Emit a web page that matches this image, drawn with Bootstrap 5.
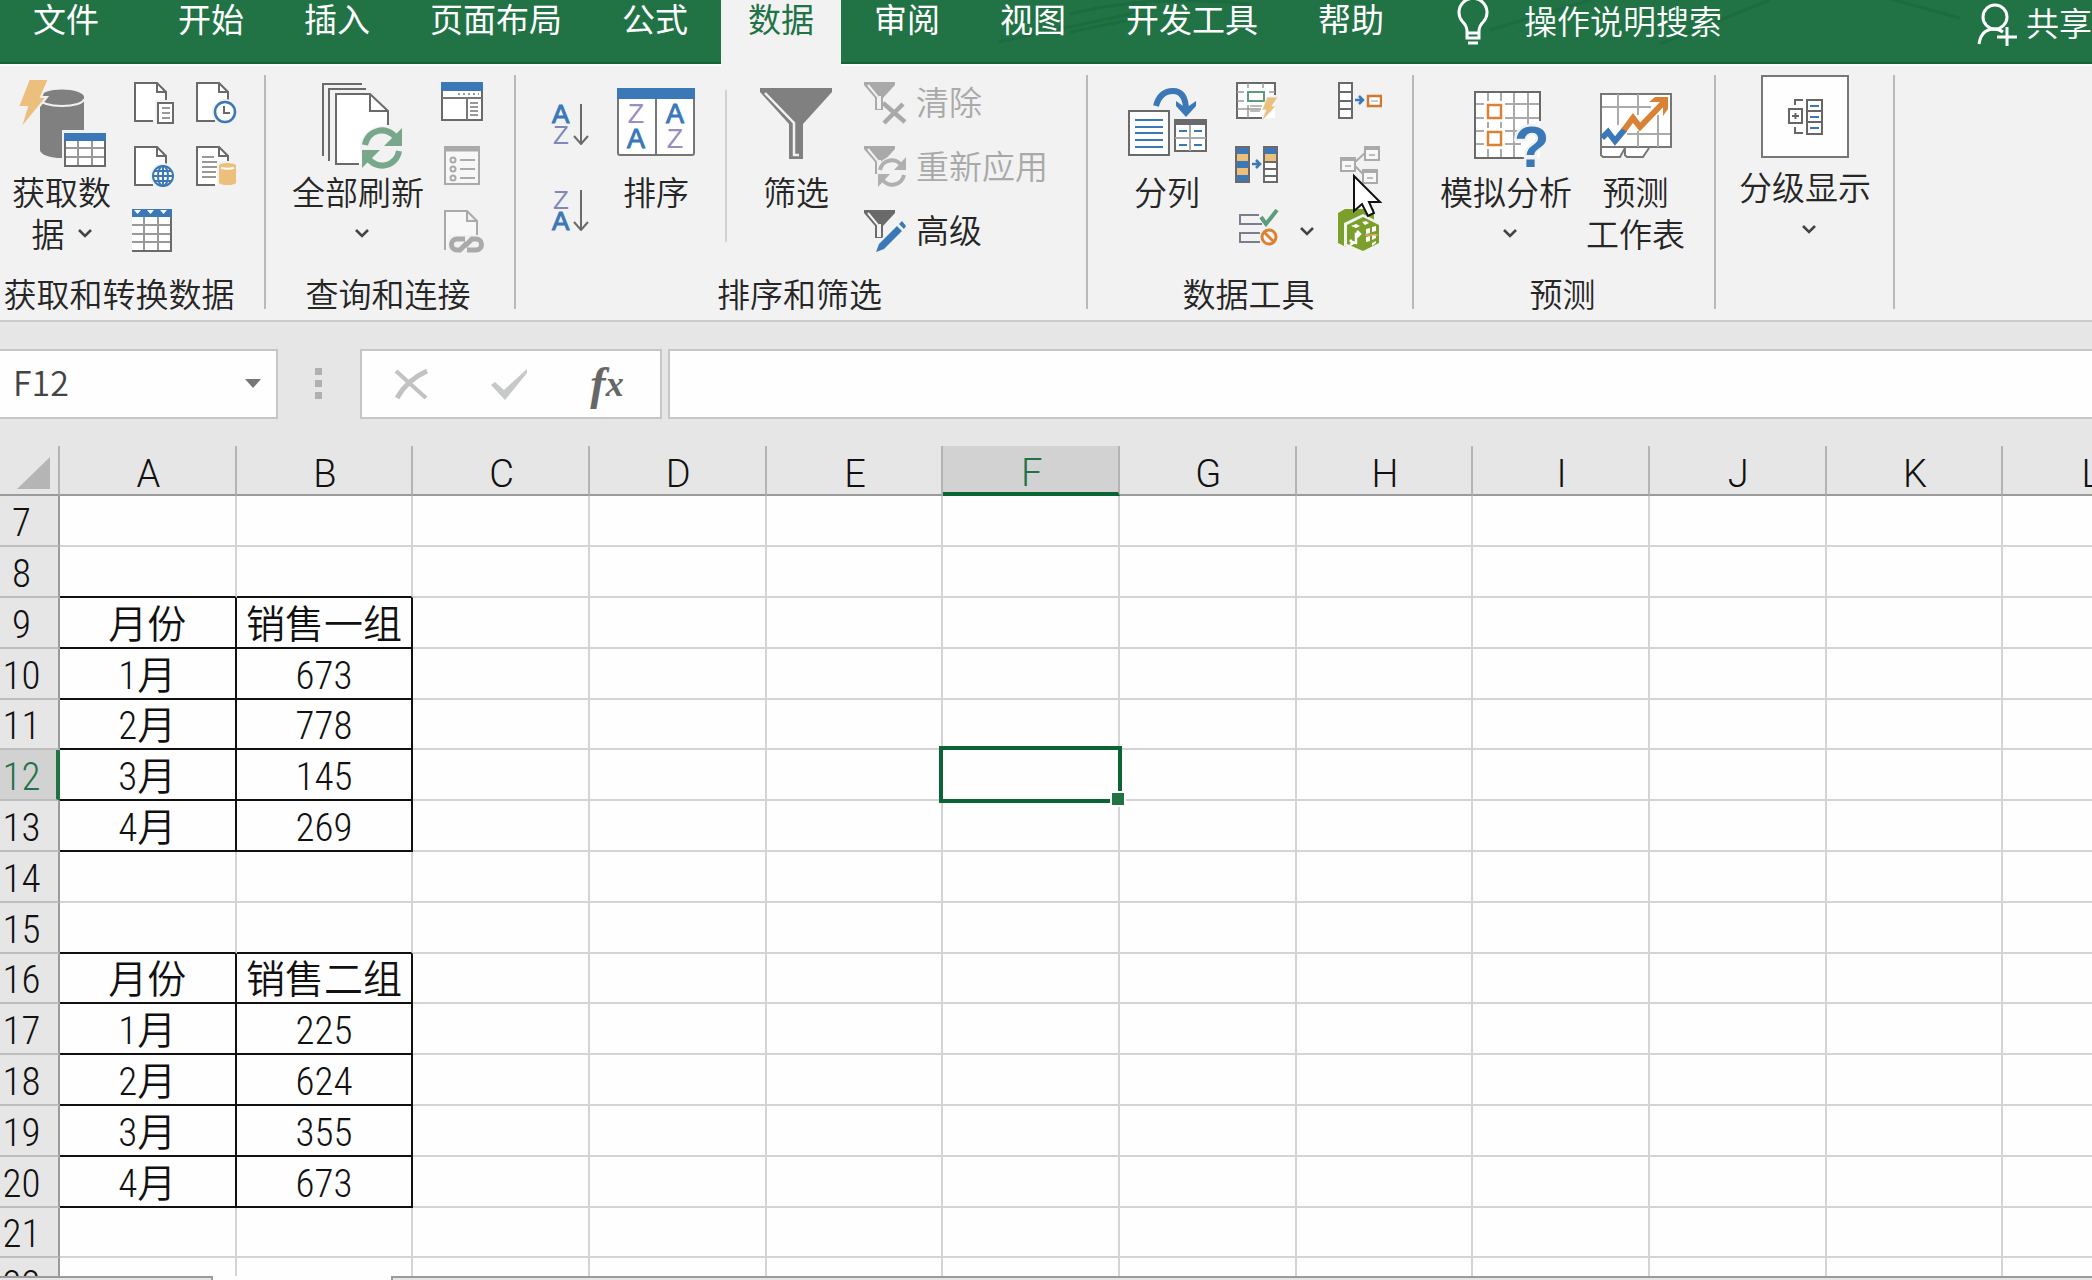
<!DOCTYPE html>
<html lang="zh-CN">
<head>
<meta charset="utf-8">
<meta name="viewport" content="width=device-width, initial-scale=1">
<title>Excel</title>
<link rel="stylesheet" href="https://cdn.jsdelivr.net/npm/bootstrap@5.3.0/dist/css/bootstrap.min.css">
<style>
:root{--green:#217346;--sel:#0b6433;--panel:#e6e6e6;--ribbon:#f2f2f2;--ui:"Noto Sans CJK SC DemiLight","Noto Sans CJK SC",sans-serif}
body{font-family:var(--ui);font-size:33px;line-height:42px;color:#262626;background:var(--panel)}
button{font:inherit;color:inherit;background:none;border:0;padding:0;white-space:nowrap}
svg{display:block;flex:none}
.tabbar{height:64px;background:var(--green);box-shadow:inset 0 -2px #156338}
.tabbar .nav{gap:6px;padding-left:6px}
.tabbar .nav-link{padding:0 27px;height:66px;line-height:36px;color:#fff;font-family:"Noto Sans CJK SC",sans-serif}
.tabbar .nav-link.active{background:var(--ribbon);color:var(--green)}
.tabbar .file-tab{margin-right:19px}
.tell-me{gap:34px;margin-left:45px;line-height:40px;color:#fff;height:48px}
.share{gap:9px;color:#fff;height:50px;line-height:44px}
.swirl{left:900px;top:0;pointer-events:none}
.ribbon{background:var(--ribbon);border-top:2px solid #fdfdfd;border-bottom:2px solid #cacaca;padding:9px 0 11px}
.rgroup{height:234px;border-right:2px solid #b9b9b9}
.rlabel{line-height:28px;text-align:center;white-space:nowrap}
.rbody{height:204px}
.big{display:flex;flex-direction:column;align-items:center;min-width:80px}
.pic{height:95px}
.icons{display:grid;grid-template-columns:44px 44px;column-gap:18px;grid-auto-rows:44px;row-gap:20px;padding-top:6px;align-content:start;justify-items:center;align-items:center}
.icons.one{grid-template-columns:44px}
.icons.tools{grid-template-columns:44px 55px 44px;column-gap:0}
.filters{padding-top:6px;gap:20px}
.filters button{height:44px;display:flex;align-items:center;gap:8px}
.filters span{padding-bottom:4px}
.off{color:#a9a9a9}
.sorts{padding-top:28px;gap:44px}
.vline{width:2px;height:152px;margin-top:15px;background:#d2d2d2}
.get{padding-right:26px}.conn{padding:0 30px 0 26px}.sort{padding:0 38px 0 35px}.tools-g{padding:0 34px 0 39px}.fore{padding:0 29px 0 26px}.outl{padding:0 22px 0 23px}
.tools-g .rlabel{padding-right:8px}
.fbar{padding:27px 0}
.fbox{height:70px;background:#fefefe;border:2px solid #c6c6c6}
.namebox{width:278px;border-left:0}
.namebox input{font-family:var(--ui);font-size:34px;line-height:40px;color:#444;border:0;background:none;width:220px;padding:0 0 4px 13px;outline:0}
.namebox button{padding-left:25px}
.fxbox{width:302px;margin-left:33px;padding-right:4px}
.fxbox button{flex:1;display:flex;justify-content:center;align-items:center}
.fx{font-family:"Liberation Serif",serif;font-style:italic;font-weight:700;color:#666;font-size:46px}
.fx span{font-size:36px}
.formula{margin-left:6px;border-right:0;padding:0 12px;outline:0}
.sheet-view{background:#fefefe}
.cells{border-collapse:separate;border-spacing:0;table-layout:fixed;width:calc(100% + 88px);color:#111;font:300 39px/44px "Roboto Condensed","Noto Sans CJK SC",sans-serif}
.cells col.rowhead{width:60px}
.cells th,.cells td{padding:5px 0 0;line-height:44px;text-align:center;font-weight:300;white-space:nowrap;border:0 solid #d4d4d4;border-width:0 2px 2px 0}
.cells thead th{height:50px;background:var(--panel);border-bottom-color:#9b9b9b;border-right-color:#b4b4b4;font-family:Roboto,sans-serif;font-size:38px;line-height:40px;padding:8px 0 0 2px}
.cells tbody tr{height:51px}
.cells tbody tr:nth-child(5n){height:50px}
.cells tbody tr:nth-child(5n)>*{line-height:43px}
.cells tbody th{background:var(--panel);border-right-color:#9b9b9b;border-bottom-color:#bdbdbd;padding-right:15px}
.cells thead th.hot{background:#d2d2d2;color:var(--green);border-bottom:4px solid var(--sel);line-height:38px}
.cells tbody th.hot{background:#d2d2d2;color:var(--green);border-right:4px solid var(--green);padding-right:13px}
.cells td{font-family:"Roboto Condensed","Noto Sans CJK SC DemiLight","Noto Sans CJK SC",sans-serif}
.cells td.ln{border-bottom-color:#111}
.cells td.bx{border-color:#111}
.cells td.picked{position:relative}
.picked i{position:absolute;inset:-4px;border:4px solid var(--sel)}
.picked i::after{content:"";position:absolute;right:-6px;bottom:-6px;width:12px;height:12px;background:var(--green);outline:2px solid #fefefe}
.strip{height:4px;background:#fefefe}
.strip span{background:var(--panel);border-top:2px solid #9b9b9b}
.strip .l{width:213px;border-right:2px solid #9b9b9b}
.strip .r{margin-left:178px;border-left:2px solid #9b9b9b}
.pointer{left:1352px;top:173px;pointer-events:none}
</style>
<script src="https://cdn.jsdelivr.net/npm/bootstrap@5.3.0/dist/js/bootstrap.bundle.min.js"></script>
</head>
<body>
<svg width="0" height="0" class="position-absolute">
  <defs>
    <symbol id="chev" viewBox="0 0 14 10"><path d="M1 2l6 6 6-6" fill="none" stroke="#444" stroke-width="2.6"/></symbol>
    <symbol id="page" viewBox="0 0 44 44"><path d="M3 2H25L34 11V40H3Z" fill="#fff"/><path d="M21 40H3V2H25L34 11V20M25 2V11H34" fill="none" stroke="#6a6a6a" stroke-width="2"/></symbol>
    <symbol id="funnel" viewBox="0 0 44 44"><path d="M0 1H31V4L19 17V29H11V17L0 4Z" fill="currentColor"/><path d="M4 4L14 16V27H16V15" fill="none" stroke="#f2f2f2" stroke-width="2"/></symbol>
  </defs>
</svg>
<div class="d-flex flex-column vh-100 overflow-hidden position-relative">
  <header class="tabbar d-flex align-items-start position-relative">
    <svg class="swirl position-absolute" width="1192" height="62" fill="none" stroke="#1d6b40" stroke-width="3"><path d="M98 42L230 14L250 0M170 14Q250 -6 350 4M170 32L250 16M590 30L690 0M760 44L870 0M980 -4L1060 18"/></svg>
    <ul class="nav flex-nowrap position-relative">
      <li class="file-tab"><a class="nav-link" href="#">文件</a></li>
      <li><a class="nav-link" href="#">开始</a></li>
      <li><a class="nav-link" href="#">插入</a></li>
      <li><a class="nav-link" href="#">页面布局</a></li>
      <li><a class="nav-link" href="#">公式</a></li>
      <li><a class="nav-link active" href="#" aria-current="page">数据</a></li>
      <li><a class="nav-link" href="#">审阅</a></li>
      <li><a class="nav-link" href="#">视图</a></li>
      <li><a class="nav-link" href="#">开发工具</a></li>
      <li><a class="nav-link" href="#">帮助</a></li>
    </ul>
    <button class="tell-me d-flex position-relative">
      <svg width="34" height="46" viewBox="0 0 34 46" fill="none" stroke="#fff" stroke-width="3"><path d="M11 31Q11 26 6 21A14 14 0 1 1 28 21Q23 26 23 31V38H11ZM11 33H23M12 43H22"/></svg>
      <span>操作说明搜索</span>
    </button>
    <button class="share d-flex ms-auto position-relative">
      <svg width="40" height="48" viewBox="0 0 40 48" fill="none" stroke="#fff" stroke-width="3"><circle cx="18" cy="17" r="12"/><path d="M2 44Q4 30 16 29Q22 29 26 32M30 27V46M20 37H40"/></svg>
      <span>共享</span>
    </button>
  </header>

  <section class="ribbon d-flex flex-nowrap">
    <div class="rgroup get d-flex flex-column">
      <div class="rbody d-flex">
        <button class="big" style="width:123px">
          <svg class="pic" width="90" viewBox="0 0 90 95"><path d="M23 22V75A22 8 0 0 0 67 75V22Z" fill="#808080"/><ellipse cx="45" cy="22" rx="22" ry="7.500" fill="#808080"/><path d="M23 24A22 7 0 0 0 67 24" fill="none" stroke="#f2f2f2" stroke-width="2"/><path d="M12 4H32L24 22H30L3 55L10 32H1Z" fill="#edbf7c" stroke="#f2f2f2" stroke-width="2"/><path d="M45 55H90V94H45Z" fill="#f2f2f2"/><path d="M48 60H88V91H48Z" fill="#fff" stroke="#6a6a6a" stroke-width="2"/><path d="M61 66V90M75 66V90M49 73H87M49 82H87" stroke="#999" stroke-width="2"/><path d="M47 58H89V66H47Z" fill="#3a78b8"/></svg>
          <span>获取数</span>
          <span class="d-flex align-items-center" style="gap:13px">据<svg width="14" height="10"><use href="#chev"/></svg></span>
        </button>
        <div class="icons" style="margin-left:9px">
          <button aria-label="从文本/CSV"><svg width="44" height="44"><use href="#page"/><path d="M23 19H44V44H23Z" fill="#f2f2f2"/><path d="M26 22H41V42H26Z" fill="#fff" stroke="#6a6a6a" stroke-width="2"/><path d="M30 27H38M30 32H38M30 37H38" stroke="#777" stroke-width="1.500"/></svg></button>
          <button aria-label="最近使用的源"><svg width="44" height="44"><use href="#page"/><circle cx="31" cy="31" r="13" fill="#f2f2f2"/><circle cx="31" cy="31" r="10" fill="#fff" stroke="#3a78b8" stroke-width="2.500"/><path d="M30 25V32H36" fill="none" stroke="#6a6a6a" stroke-width="2"/></svg></button>
          <button aria-label="自网站"><svg width="44" height="44"><use href="#page"/><circle cx="31" cy="31" r="13" fill="#f2f2f2"/><g fill="#fff" stroke="#3a78b8" stroke-width="2"><circle cx="31" cy="31" r="10"/><ellipse cx="31" cy="31" rx="5" ry="10"/><path d="M31 21V41M21 31H41M23 26H39M23 36H39" fill="none"/></g></svg></button>
          <button aria-label="现有连接"><svg width="44" height="44"><use href="#page"/><path d="M8 12H20M8 17H28M8 22H24M8 27H22M8 32H22" stroke="#777" stroke-width="1.500"/><path d="M23 16H44V43H23Z" fill="#f2f2f2"/><path d="M25 20A9 3 0 0 1 42 20V38A9 3 0 0 1 25 38Z" fill="#edbf7c"/><path d="M27 23A9 2 0 0 0 40 23" fill="none" stroke="#fff" stroke-width="2"/></svg></button>
          <button aria-label="自表格/区域"><svg width="44" height="44" viewBox="2 1 44 44"><path d="M1 1H41V43H1Z" fill="#fff" stroke="#6a6a6a" stroke-width="2"/><path d="M14 9V42M28 9V42M2 17H40M2 26H40M2 34H40" stroke="#999" stroke-width="2"/><path d="M0 0H42V9H0Z" fill="#3a78b8"/><path d="M4 2H11L7.500 6ZM17 2H24L20.500 6ZM30 2H37L33.500 6Z" fill="#fff"/></svg></button>
        </div>
      </div>
      <div class="rlabel">获取和转换数据</div>
    </div>

    <div class="rgroup conn d-flex flex-column">
      <div class="rbody d-flex">
        <button class="big">
          <svg class="pic" width="96" viewBox="-3 0 96 95" fill="none" stroke="#6a6a6a" stroke-width="2"><path d="M10 81V9H49M16 86V14H53"/><path d="M23 89V19H57L75 36V89Z" fill="#fff" stroke="none"/><path d="M46 89H23V19H57L75 36V50M57 19V36H75"/><circle cx="69" cy="73" r="22" fill="#f2f2f2" stroke="none"/><g stroke="#79a78c" stroke-width="6"><path d="M52 70A17 17 0 0 1 83 63M86 76A17 17 0 0 1 55 83"/></g><path d="M89 53V71H71ZM49 93V75H67Z" fill="#79a78c" stroke="none"/></svg>
          <span>全部刷新</span>
          <svg width="22" height="42" viewBox="0 0 22 42"><use href="#chev" x="8" y="16" width="14" height="10"/></svg>
        </button>
        <div class="icons one" style="margin-left:16px">
          <button aria-label="查询和连接"><svg width="44" height="44"><path d="M2 2H42V39H2Z" fill="#fff" stroke="#6a6a6a" stroke-width="2"/><path d="M1 1H43V10H1Z" fill="#3a78b8"/><path d="M2 17H42M27 17V39" stroke="#777" stroke-width="2"/><path d="M18 13H39" stroke="#999" stroke-width="2" stroke-dasharray="2 3"/><path d="M30 22H38M30 26H38M30 30H38M30 34H38" stroke="#777" stroke-width="1.500"/></svg></button>
          <button aria-label="属性"><svg width="44" height="44" fill="none" stroke="#aaa" stroke-width="2"><path d="M5 2H39V39H5Z" fill="#f7f7f7"/><path d="M4 4H40" stroke-width="5"/><path d="M20 15H35M20 24H35M20 33H35"/><circle cx="13" cy="15" r="2.500"/><circle cx="13" cy="24" r="2.500"/><circle cx="13" cy="33" r="2.500"/></svg></button>
          <button aria-label="编辑链接"><svg width="44" height="44" fill="none" stroke="#aaa" stroke-width="2"><path d="M5 41V2H27L37 12V26M27 2V12H37" fill="#f7f7f7"/><path d="M8 26H44V44H8Z" fill="#f2f2f2" stroke="none"/><g stroke-width="5"><path d="M25 30H17A5.500 5.500 0 0 0 17 41H20L27 34M27 41H36A5.500 5.500 0 0 0 36 30H32L25 37"/></g></svg></button>
        </div>
      </div>
      <div class="rlabel">查询和连接</div>
    </div>

    <div class="rgroup sort d-flex flex-column">
      <div class="rbody d-flex">
        <div class="sorts d-flex flex-column">
          <button aria-label="升序"><svg width="40" height="42" font-family="Liberation Sans,sans-serif" font-size="26"><text x="1" y="20" fill="#3a78b8" stroke="#3a78b8">A</text><text x="2" y="41" fill="#8088bb">Z</text><path d="M30 1V40M23 33L30 41L37 33" fill="none" stroke="#6a6a6a" stroke-width="2"/></svg></button>
          <button aria-label="降序"><svg width="40" height="42" font-family="Liberation Sans,sans-serif" font-size="26"><text x="2" y="20" fill="#8088bb">Z</text><text x="1" y="41" fill="#3a78b8" stroke="#3a78b8">A</text><path d="M30 1V40M23 33L30 41L37 33" fill="none" stroke="#6a6a6a" stroke-width="2"/></svg></button>
        </div>
        <button class="big" style="margin-left:25px">
          <svg class="pic" width="80" font-family="Liberation Sans,sans-serif" font-size="27" text-anchor="middle"><rect x="2" y="14" width="76" height="66" rx="2" fill="#fff" stroke="#777" stroke-width="2"/><path d="M1 13H79V24H1Z" fill="#3a78b8"/><path d="M40 24V80" stroke="#777" stroke-width="2"/><text x="20" y="48" fill="#9a8ec0">Z</text><text x="20" y="73" fill="#3a78b8" stroke="#3a78b8">A</text><text x="59" y="48" fill="#3a78b8" stroke="#3a78b8">A</text><text x="59" y="73" fill="#9a8ec0">Z</text></svg>
          <span>排序</span>
        </button>
        <div class="vline" style="margin-left:29px"></div>
        <button class="big" style="margin-left:29px">
          <svg class="pic" width="80"><path d="M4 13H76V17L47 49V84H33V49L4 17Z" fill="#808080"/><path d="M9 18L38 48V80H43" fill="none" stroke="#f2f2f2" stroke-width="2.500"/></svg>
          <span>筛选</span>
        </button>
        <div class="filters d-flex flex-column" style="margin-left:28px">
          <button class="off" disabled><svg width="44" height="44"><use href="#funnel"/><path d="M19 22L41 41M39 23L20 42" stroke="#a9a9a9" stroke-width="4.500"/></svg><span>清除</span></button>
          <button class="off" disabled><svg width="44" height="44"><use href="#funnel"/><circle cx="28" cy="27" r="15" fill="#f2f2f2"/><path d="M16 25A12 12 0 0 1 38 21M40 30A12 12 0 0 1 18 34" fill="none" stroke="#b0b0b0" stroke-width="4"/><path d="M42 12V25H30ZM14 42V29H26Z" fill="#b0b0b0"/></svg><span>重新应用</span></button>
          <button><svg width="44" height="44" color="#6a6a6a"><use href="#funnel"/><path d="M10 44L13 34L37 10L44 17L20 41Z" fill="#f2f2f2"/><path d="M12 43L15 35L33 17L38 22L20 40ZM35 15L38 12L42 17L40 20Z" fill="#3a78b8"/></svg><span>高级</span></button>
        </div>
      </div>
      <div class="rlabel">排序和筛选</div>
    </div>

    <div class="rgroup tools-g d-flex flex-column">
      <div class="rbody d-flex">
        <button class="big">
          <svg class="pic" width="80"><path d="M2 36H42V80H2Z" fill="#fff" stroke="#6a6a6a" stroke-width="2"/><path d="M8 45H36M8 52H36M8 58H36M8 65H36M8 72H36" stroke="#3a78b8" stroke-width="2"/><path d="M48 45H79V76H48Z" fill="#fff" stroke="#6a6a6a" stroke-width="2"/><path d="M47 47H80" stroke="#6a6a6a" stroke-width="6"/><path d="M63 50V76M48 63H79" stroke="#aaa" stroke-width="2"/><path d="M52 56H60M67 56H75M52 70H60M67 70H75" stroke="#3a78b8" stroke-width="2"/><path d="M29 31Q33 16 46 16Q59 16 59 36" fill="none" stroke="#3a78b8" stroke-width="6"/><path d="M49 26L59 33L69 26V31L59 42L49 31Z" fill="#3a78b8"/></svg>
          <span>分列</span>
        </button>
        <div class="icons tools" style="margin-left:28px">
          <button aria-label="快速填充"><svg width="44" height="44"><path d="M2 2H40V37H2Z" fill="#fff"/><path d="M27 37H2V2H40V14" fill="none" stroke="#6a6a6a" stroke-width="2"/><path d="M2 11H9M34 11H40M2 20H9M2 28H26M13 2V7M28 2V7M13 24V37" stroke="#999" stroke-width="1.500"/><path d="M13 11H29V20H13Z" fill="none" stroke="#5f9c7b" stroke-width="2"/><path d="M15 25H27M15 30H25" stroke="#bbb" stroke-width="2"/><path d="M32 16H43L37 25H41L26 41L31 29H27Z" fill="#edbf7c" stroke="#f2f2f2"/></svg></button>
          <span></span>
          <button aria-label="合并计算" class="ms-2"><svg width="44" height="44"><path d="M1 2H14V37H1ZM1 11H14M1 20H14M1 28H14" fill="#fff" stroke="#6a6a6a" stroke-width="2"/><path d="M17 19H25M21 15L25 19L21 23" fill="none" stroke="#3a78b8" stroke-width="2.500"/><path d="M30 15H43V25H30Z" fill="#fff" stroke="#d0782f" stroke-width="2.500"/><path d="M33 20H40" stroke="#999"/></svg></button>
          <button aria-label="删除重复值"><svg width="44" height="44"><path d="M0 1H14V38H0Z" fill="#3a78b8"/><path d="M0 9H14V16H0ZM0 23H14V30H0Z" fill="#edbf7c"/><path d="M29 1H43V9H29Z" fill="#3a78b8"/><path d="M29 9H43V16H29Z" fill="#edbf7c"/><path d="M29 16H43V38H29Z" fill="#fff"/><path d="M1 2H14V37H1ZM29 2H42V37H29ZM29 17H42M29 24H42M29 31H42" fill="none" stroke="#6a6a6a" stroke-width="2"/><path d="M17 19H25M21 15L25 19L21 23" fill="none" stroke="#3a78b8" stroke-width="2.500"/></svg></button>
          <span></span>
          <button aria-label="关系" class="ms-2" disabled><svg width="44" height="44" fill="#f7f7f7" stroke="#aaa" stroke-width="2"><path d="M17 17L27 8M17 21L26 30"/><path d="M3 13H17V26H3ZM27 2H41V15H27ZM25 25H39V38H25Z"/><path d="M3 14H17M27 3H41M25 26H39" stroke-width="4"/><path d="M7 21H13M31 10H37M29 33H35" stroke-width="1.500"/></svg></button>
          <button aria-label="数据验证"><svg width="44" height="44" fill="none" stroke="#7b7d8c" stroke-width="2"><path d="M24 6H5V15H27M25 24H5V33H25" /><path d="M26 8L31 15L42 1" stroke="#5f9c7b" stroke-width="4"/><circle cx="34" cy="28" r="7" stroke="#d98236" stroke-width="3"/><path d="M29 23L39 33" stroke="#d98236" stroke-width="3"/></svg></button>
          <button aria-label="数据验证选项"><svg width="14" height="10"><use href="#chev"/></svg></button>
          <button aria-label="管理数据模型" class="ms-2"><svg width="44" height="44"><path d="M0 4L7 0H36V34L8 38L0 34Z" fill="#7a9f2b"/><path d="M6 14L25 5L43 14V35L25 44L6 37Z" fill="#f2f2f2"/><path d="M9 16L25 8L41 16V34L25 42L9 35Z" fill="#7a9f2b"/><path d="M13 17L18 15L22 17L18 19ZM24 13L28 12L31 14L27 16ZM28 20L32 19V24L28 25ZM34 18L38 17V22L34 23ZM28 28L32 27V32L28 33ZM34 26L38 25V29L34 31ZM34 34L38 32V34L34 37Z" fill="#fff"/><path d="M14 33L18 34V25H22M19 22L22 25L19 28M12 31L15 34L12 36" fill="none" stroke="#fff" stroke-width="2.500"/><path d="M27 26H40" stroke="#e9a15f" stroke-width="1.500"/></svg></button>
        </div>
      </div>
      <div class="rlabel">数据工具</div>
    </div>

    <div class="rgroup fore d-flex flex-column">
      <div class="rbody d-flex">
        <button class="big">
          <svg class="pic" width="90"><path d="M14 17H79V83H14Z" fill="#fff"/><path d="M27 17V83M40 17V83M53 17V83M67 17V50M14 29H79M14 43H79M14 56H60M14 69H60" stroke="#aaa" stroke-width="2"/><path d="M65 83H14V17H79V46" fill="none" stroke="#6a6a6a" stroke-width="2"/><path d="M23 26H44V47H23ZM23 53H44V74H23Z" fill="#fff"/><path d="M27 30H40V43H27ZM27 57H40V70H27Z" fill="#fff" stroke="#d98236" stroke-width="2.500"/><text x="53" y="92" font-family="Liberation Sans,sans-serif" font-size="58" font-weight="700" fill="#3a78b8" stroke="#f2f2f2" stroke-width="5" paint-order="stroke">?</text></svg>
          <span>模拟分析</span>
          <svg width="22" height="42" viewBox="0 0 22 42"><use href="#chev" x="8" y="16" width="14" height="10"/></svg>
        </button>
        <button class="big" style="margin-left:14px">
          <svg class="pic" width="90"><path d="M10 73V80L12 82H29L34 73V80L36 82H52L58 73" fill="#fff" stroke="#777" stroke-width="2"/><path d="M10 19H80V72H10Z" fill="#fff" stroke="#777" stroke-width="2"/><path d="M27 19V50M47 19V40M47 56V72M67 40V72M11 32H60M36 59H79" stroke="#aaa" stroke-width="2"/><path d="M11 63L17 57L24 66L34 54" fill="none" stroke="#3a78b8" stroke-width="6"/><path d="M33 55L42 43L49 52L73 27" fill="none" stroke="#d98236" stroke-width="6"/><path d="M58 27L64 22H77V34L72 41V27Z" fill="#d98236"/></svg>
          <span>预测</span>
          <span>工作表</span>
        </button>
      </div>
      <div class="rlabel">预测</div>
    </div>

    <div class="rgroup outl d-flex flex-column">
      <div class="rbody d-flex">
        <button class="big">
          <svg width="88" height="90"><path d="M1 1H87V82H1Z" fill="#fefefe" stroke="#777" stroke-width="2"/><g fill="none" stroke="#666" stroke-width="2"><path d="M28 34H41V48H28ZM46 25H61V59H46ZM46 36H61M46 47H61M34 30V25H42M34 52V58H42M31 41H38M34.500 38V44"/></g><path d="M49 31H58M49 42H58M49 53H58" stroke="#3a78b8" stroke-width="2"/></svg>
          <span>分级显示</span>
          <svg width="22" height="42" viewBox="0 0 22 42"><use href="#chev" x="8" y="17" width="14" height="10"/></svg>
        </button>
      </div>
    </div>
  </section>

  <section class="fbar d-flex align-items-center">
    <div class="fbox namebox d-flex align-items-center">
      <input type="text" value="F12" aria-label="名称框">
      <button aria-label="名称列表"><svg width="16" height="10"><path d="M0 0H16L8 9Z" fill="#777"/></svg></button>
    </div>
    <svg width="16" height="34" style="margin-left:33px" fill="#b0b0b0"><path d="M4 1H11V8H4ZM4 13H11V20H4ZM4 25H11V32H4Z"/></svg>
    <div class="fbox fxbox d-flex">
      <button aria-label="取消"><svg width="36" height="32" fill="none" stroke="#c2c2c2"><path d="M3 3L33 30" stroke-width="4"/><path d="M34 3Q14 12 4 30" stroke-width="5"/></svg></button>
      <button aria-label="输入"><svg width="38" height="32"><path d="M1 17L5 14L14 22L37 1V5L15 32Z" fill="#c6c9c8"/></svg></button>
      <button class="fx" aria-label="插入函数">f<span>x</span></button>
    </div>
    <input class="fbox formula flex-grow-1" type="text" aria-label="编辑栏">
  </section>

  <main class="sheet-view flex-grow-1 overflow-hidden" style="min-height:0">
    <table class="cells">
      <colgroup><col class="rowhead"><col span="12"></colgroup>
      <thead><tr id="heads"><th><svg width="34" height="34" class="ms-auto me-2"><path d="M34 0V32H1Z" fill="#b5b5b5"/></svg></th></tr></thead>
      <tbody id="rows"></tbody>
    </table>
  </main>
  <div class="strip d-flex"><span class="l"></span><span class="r flex-grow-1"></span></div>

  <svg class="pointer position-absolute" width="32" height="46"><path d="M2 3V38L10 31L16 43L22 40L17 29H28Z" fill="#fff" stroke="#111" stroke-width="2"/></svg>
</div>
<script>
const cols = [...'ABCDEFGHIJKL'];
const data = {
  9: ['月份', '销售一组'], 10: ['1月', 673], 11: ['2月', 778], 12: ['3月', 145], 13: ['4月', 269],
  16: ['月份', '销售二组'], 17: ['1月', 225], 18: ['2月', 624], 19: ['3月', 355], 20: ['4月', 673]
};
heads.insertAdjacentHTML('beforeend', cols.map(c => `<th${c === 'F' ? ' class="hot"' : ''}>${c}</th>`).join(''));
for (let r = 7; r <= 22; r++) {
  const cells = cols.map((c, i) => {
    if (r === 12 && c === 'F') return '<td class="picked"><i></i></td>';
    const cls = i < 2 ? (data[r] ? 'bx' : data[r + 1] ? 'ln' : '') : '';
    return `<td class="${cls}">${data[r]?.[i] ?? ''}</td>`;
  });
  rows.insertAdjacentHTML('beforeend', `<tr><th${r === 12 ? ' class="hot"' : ''}>${r}</th>${cells.join('')}</tr>`);
}
</script>
</body>
</html>
